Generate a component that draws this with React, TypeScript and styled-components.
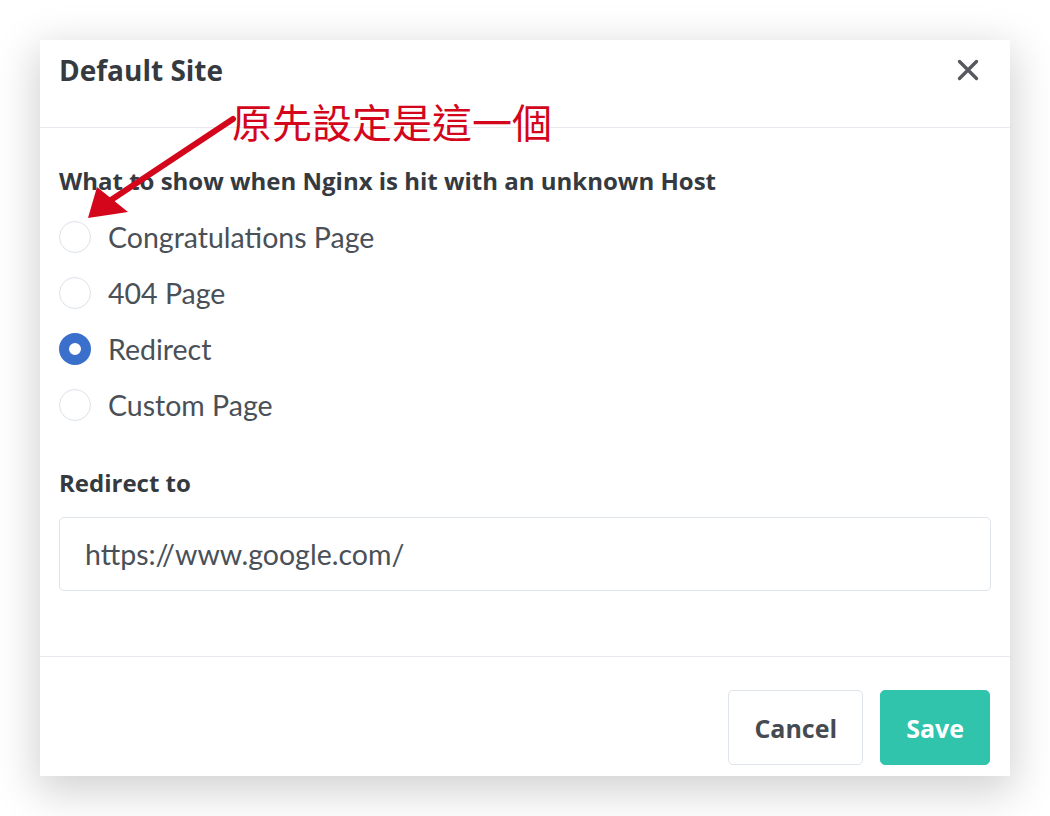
import styled, { createGlobalStyle } from "styled-components";

const GlobalStyle = createGlobalStyle`
  html, body {
    margin: 0;
    padding: 0;
    background: #ffffff;
  }
  body {
    font-family: Lato, "Noto Sans", "Liberation Sans", sans-serif;
    color: #495057;
  }
`;

const boldFont = `"Open Sans", "Noto Sans", "Liberation Sans", sans-serif`;

const Page = styled.div`
  width: 1050px;
  height: 816px;
  padding: 40px 40px 0 40px;
  box-sizing: border-box;
  background: #ffffff;
  position: relative;
`;

const Modal = styled.div`
  width: 970px;
  height: 736px;
  display: flex;
  flex-direction: column;
  background: #ffffff;
  box-shadow: rgba(0, 0, 0, 0.18) 0px 12px 40px 4px;
`;

const Header = styled.div`
  display: flex;
  align-items: center;
  justify-content: space-between;
  height: 88px;
  padding: 0 31px 28px 19px;
  box-sizing: border-box;
  border-bottom: 1px solid #e6e9ee;
`;

const Title = styled.h1`
  margin: 0;
  font-family: ${boldFont};
  font-size: 28px;
  font-weight: 700;
  color: #343a40;
`;

const Close = styled.button`
  display: flex;
  padding: 0;
  border: 0;
  background: none;
  color: #55595e;
`;

const Body = styled.div`
  flex-grow: 1;
  padding: 38px 19px 0 19px;
  box-sizing: border-box;
  border-bottom: 1px solid #e6e9ee;
`;

const FieldLabel = styled.div`
  font-family: ${boldFont};
  font-size: 24px;
  font-weight: 700;
  color: #343a40;
  height: 30px;
  line-height: 30px;
`;

const RadioList = styled.div`
  display: flex;
  flex-direction: column;
  margin-top: 13px;
  margin-bottom: 35px;
`;

const RadioRow = styled.label`
  display: flex;
  align-items: center;
  gap: 17px;
  height: 56px;
  font-size: 28.5px;
  color: #495057;
`;

const RadioDot = styled.span<{ $checked?: boolean }>`
  width: 32px;
  height: 32px;
  border-radius: 50%;
  box-sizing: border-box;
  flex-shrink: 0;
  border: ${(p) => (p.$checked ? "10.5px solid #3a6fcc" : "1.5px solid #dde2ea")};
  background: #ffffff;
`;

const Input = styled.div`
  margin-top: 19px;
  height: 74px;
  border: 1.5px solid #dfe3ea;
  border-radius: 5px;
  box-sizing: border-box;
  display: flex;
  align-items: center;
  padding-left: 25px;
  font-size: 28.5px;
  color: #495057;
`;

const Footer = styled.div`
  display: flex;
  justify-content: flex-end;
  gap: 17px;
  padding: 33px 20px 11px 0;
`;

const Button = styled.button<{ $primary?: boolean }>`
  height: 75px;
  padding: 0 25px;
  border-radius: 5px;
  font-family: ${boldFont};
  font-size: 25px;
  font-weight: 700;
  box-sizing: border-box;
  border: 1.5px solid ${(p) => (p.$primary ? "#2fc4ab" : "#dfe3ea")};
  background: ${(p) => (p.$primary ? "#2fc4ab" : "#ffffff")};
  color: ${(p) => (p.$primary ? "#ffffff" : "#464b52")};
`;

const Note = styled.div`
  position: absolute;
  left: 232px;
  top: 92px;
  font-family: "Noto Sans CJK TC", "Noto Sans CJK SC", sans-serif;
  font-size: 40px;
  font-weight: 400;
  color: #d3061c;
  white-space: nowrap;
`;

const Arrow = styled.svg`
  position: absolute;
  left: 0;
  top: 0;
  pointer-events: none;
`;

const options = [
  { label: "Congratulations Page", checked: false },
  { label: "404 Page", checked: false },
  { label: "Redirect", checked: true },
  { label: "Custom Page", checked: false },
];

export default function App() {
  return (
    <>
      <GlobalStyle />
      <Page>
        <Modal>
          <Header>
            <Title>Default Site</Title>
            <Close aria-label="Close">
              <svg width="22" height="22" viewBox="0 0 22 22">
                <path
                  d="M2.5 2.5 L19.5 19.5 M19.5 2.5 L2.5 19.5"
                  stroke="currentColor"
                  strokeWidth="3.4"
                  strokeLinecap="round"
                />
              </svg>
            </Close>
          </Header>
          <Body>
            <FieldLabel>What to show when Nginx is hit with an unknown Host</FieldLabel>
            <RadioList>
              {options.map((o) => (
                <RadioRow key={o.label}>
                  <RadioDot $checked={o.checked} />
                  {o.label}
                </RadioRow>
              ))}
            </RadioList>
            <FieldLabel>Redirect to</FieldLabel>
            <Input>https://www.google.com/</Input>
          </Body>
          <Footer>
            <Button>Cancel</Button>
            <Button $primary>Save</Button>
          </Footer>
        </Modal>
        <Note>原先設定是這一個</Note>
        <Arrow width="1050" height="816" viewBox="0 0 1050 816">
          <line x1="233" y1="119" x2="108" y2="202" stroke="#d3061c" strokeWidth="6" strokeLinecap="round" />
          <polygon points="88,218 97,187 128,212" fill="#d3061c" />
        </Arrow>
      </Page>
    </>
  );
}
